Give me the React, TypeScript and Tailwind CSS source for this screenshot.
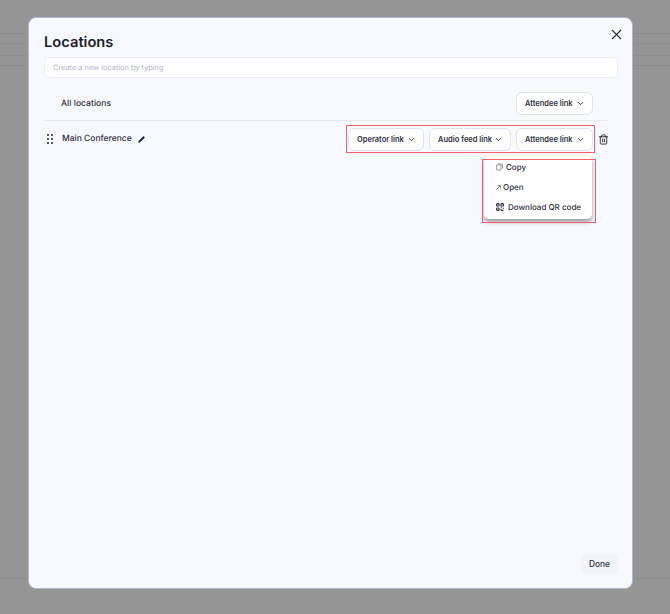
import { ChevronDown, Pencil, Trash2, X } from "lucide-react";

const font = { fontFamily: "Inter, sans-serif" };

function LinkButton({ label, className = "" }: { label: string; className?: string }) {
  return (
    <button className={`flex h-[23px] shrink-0 items-center justify-between whitespace-nowrap rounded-[6px] border border-[#e0e3ee] bg-white pl-[8px] pr-[7px] text-[7.5px] font-semibold text-[#2f3240] ${className}`}>
      <span className="pt-[1px]">{label}</span>
      <ChevronDown className="h-[9px] w-[9px] text-[#2f3240]" strokeWidth={2.4} />
    </button>
  );
}

function DragDots() {
  return (
    <div className="grid h-[10px] w-[6px] grid-cols-2 gap-x-[2px] gap-y-[2px]">
      {[0, 1, 2, 3, 4, 5].map((i) => (
        <span key={i} className="h-[2px] w-[2px] rounded-full bg-[#23252e]" />
      ))}
    </div>
  );
}

function QrIcon() {
  return (
    <svg viewBox="0 0 10 10" className="h-[8px] w-[8px]" fill="none" stroke="#2a2c36" strokeWidth="1.4">
      <rect x="0.8" y="0.8" width="3" height="3" rx="0.8" />
      <rect x="6.2" y="0.8" width="3" height="3" rx="0.8" />
      <rect x="0.8" y="6.2" width="3" height="3" rx="0.8" />
      <path d="M6 6h1.5M9.2 6v1.2M6 9.2h3.2M6 7.5v1" />
    </svg>
  );
}

function CopyIcon() {
  return (
    <svg viewBox="0 0 10 10" className="h-[8px] w-[7px]" fill="none" stroke="#5a5c68" strokeWidth="0.9">
      <rect x="0.6" y="2" width="6.6" height="7.4" rx="1" />
      <path d="M2.6 0.6h5.6a1.2 1.2 0 0 1 1.2 1.2v5.6" />
    </svg>
  );
}

function OpenIcon() {
  return (
    <svg viewBox="0 0 10 10" className="h-[5px] w-[5px]" fill="none" stroke="#4a4c58" strokeWidth="1.3">
      <path d="M1 9L8.5 1.5M3 1.2h5.8V7" />
    </svg>
  );
}

export default function App() {
  return (
    <div className="relative h-[614px] w-[670px] overflow-hidden bg-[#959595] [text-rendering:geometricPrecision]" style={font}>
      {/* page behind the overlay */}
      <div className="flex flex-col pt-[33px]">
        <div className="h-[11px] border-y border-[#8e8e8e]" />
        <div className="mt-[11px] h-[11px] border-y border-[#8e8e8e]" />
        <div className="mt-[512px] border-t border-[#8e8e8e]" />
      </div>

      <div className="absolute left-[28px] top-[17px] flex h-[572px] w-[605px] flex-col rounded-[8px] border border-[#b0b5d6] bg-[#f8f9fe] pl-[15px] pr-[14px] pt-[13px]">
        <button className="absolute right-[7px] top-[8px] text-[#2a2c36]">
          <X className="h-[17px] w-[17px]" strokeWidth={1.5} />
        </button>

        <h1 className="text-[14.7px] font-semibold leading-[22px] text-[#1d1f2a]">Locations</h1>

        <div className="mt-[4px] flex h-[21px] w-[574px] items-center rounded-[5px] border border-[#eceef5] bg-white pl-[8px] text-[7.4px] text-[#b4b7c5]">
          Create a new location by typing
        </div>

        <div className="mt-[14px] flex h-[29px] w-[563px] items-center justify-between border-b border-[#e6e8f0] pb-[5px]">
          <span className="pl-[17px] pt-[1px] text-[8.6px] font-medium text-[#2f3240]">All locations</span>
          <LinkButton label="Attendee link" className="mr-[14px] w-[77px]" />
        </div>

        <div className="relative mt-[4px] flex w-[565px] items-center">
          <div className="flex items-center pl-[3px]">
            <DragDots />
            <span className="ml-[9px] pt-[1px] text-[8.5px] font-medium text-[#2f3240]">Main Conference</span>
            <Pencil className="ml-[6px] h-[7px] w-[7px] fill-[#2a2c36] text-[#2a2c36]" strokeWidth={2} />
          </div>
          <div className="ml-auto flex h-[28px] w-[249px] items-center gap-[5px] border-[1.5px] border-[#f0616b] pl-[1px]">
            <LinkButton label="Operator link" className="w-[76px]" />
            <LinkButton label="Audio feed link" className="w-[82px]" />
            <LinkButton label="Attendee link" className="w-[77px]" />
          </div>
          <Trash2 className="ml-[3px] h-[11px] w-[11px] shrink-0 text-[#2a2c36]" strokeWidth={2} />

          {/* open dropdown */}
          <div className="absolute right-[17px] top-[31px] flex h-[63px] w-[108px] flex-col rounded-[5px] bg-white pl-[12px] pt-[1px] text-[8px] font-medium text-[#2f3240] shadow-[0_3px_4px_rgba(60,60,70,0.5)]">
            <div className="flex h-[20px] items-center gap-[3px]">
              <CopyIcon />
              <span>Copy</span>
            </div>
            <div className="flex h-[20px] items-center gap-[2px]">
              <OpenIcon />
              <span>Open</span>
            </div>
            <div className="flex h-[20px] items-center gap-[4px]">
              <QrIcon />
              <span>Download QR code</span>
            </div>
          </div>
          <div className="absolute right-[13px] top-[34px] h-[64px] w-[114px] border-[1.5px] border-[#f0616b]" />
        </div>

        <button className="absolute bottom-[14px] right-[14px] flex h-[20px] w-[37px] items-center justify-center rounded-[4px] bg-[#f3f4f9] text-[8.3px] font-medium text-[#2f3240]">
          Done
        </button>
      </div>
    </div>
  );
}
